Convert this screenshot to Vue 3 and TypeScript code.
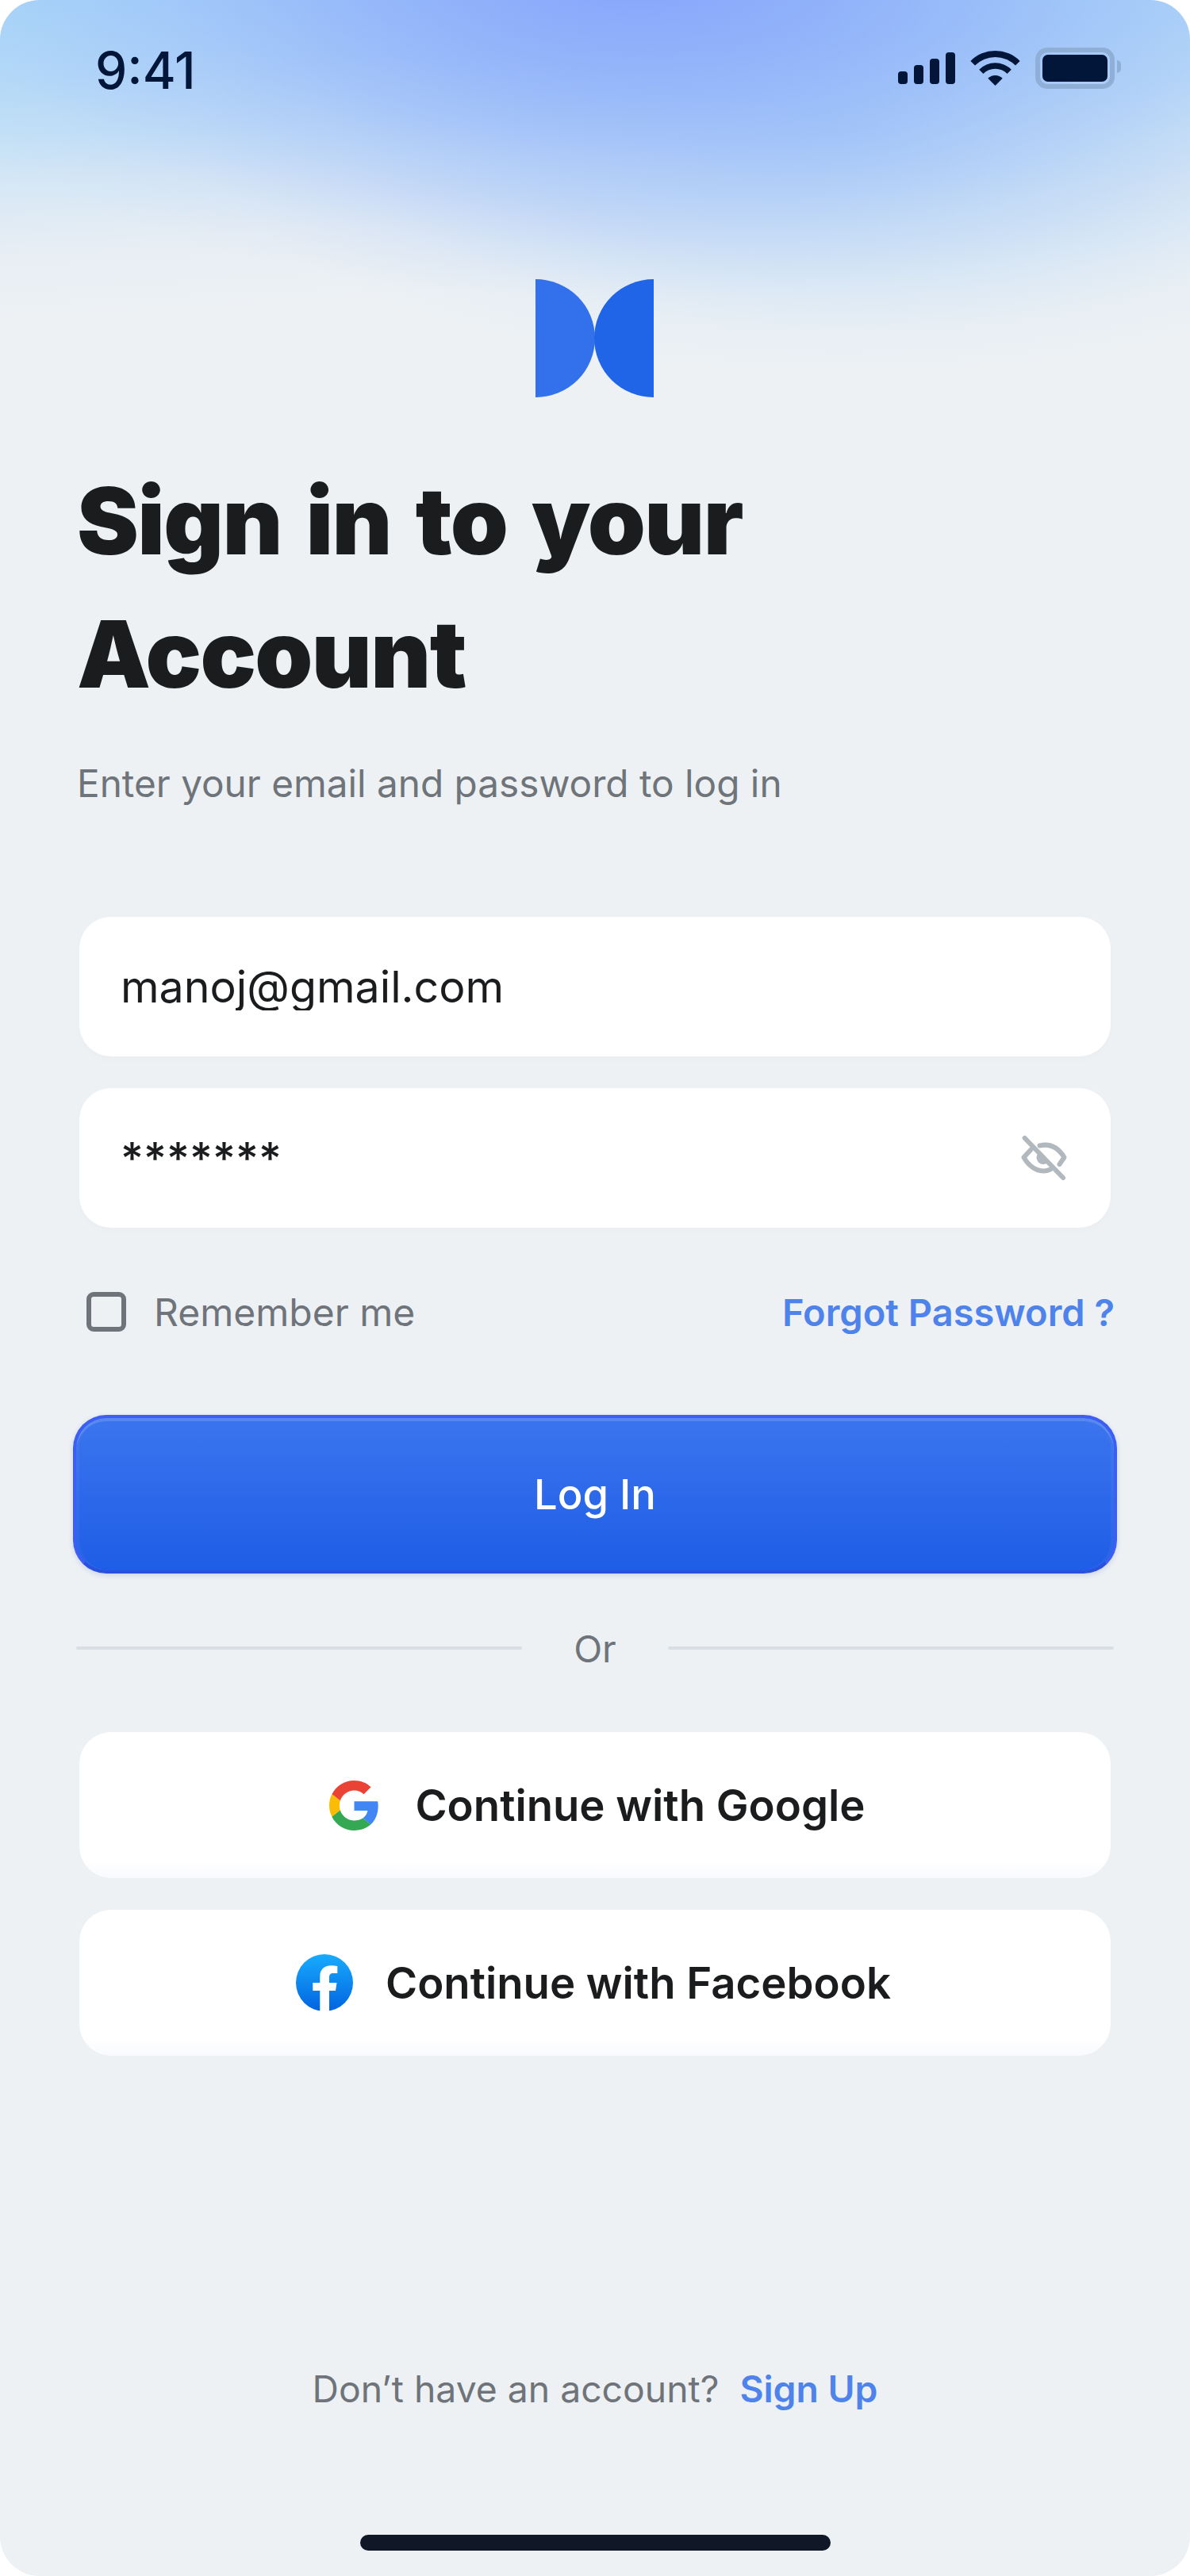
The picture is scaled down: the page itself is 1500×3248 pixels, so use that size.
<script setup lang="ts">
const email: string = 'manoj@gmail.com'
const secret: string = '*******'
const bars: number[] = [16, 24, 32, 40]
</script>

<template>
  <main class="page">
    <header class="status">
      <span class="time">9:41</span>
      <div class="status-icons">
        <div class="bars">
          <i v-for="h in bars" :key="h" class="bar" :style="{ height: h + 'px' }"></i>
        </div>
        <svg class="wifi" width="63" height="44" viewBox="-1 0 63 44" fill="#011638">
          <path d="M-.6 12.9A44 44 0 0 1 61.6 12.9L56 18.5A36 36 0 0 0 5 18.5Z" />
          <path d="M10.2 23.7A28.7 28.7 0 0 1 50.8 23.7L45.6 28.9A21.4 21.4 0 0 0 15.4 28.9Z" />
          <path d="M21.3 34.8A13 13 0 0 1 39.7 34.8L30.5 44Z" />
        </svg>
        <div class="battery"><div class="battery-fill"></div></div>
        <div class="battery-cap"></div>
      </div>
    </header>

    <svg class="logo" width="149" height="149" viewBox="0 0 149 149">
      <path d="M0 0A75 74.5 0 0 1 0 149Z" fill="#3370EB" />
      <path d="M149 0A75 74.5 0 0 0 149 149Z" fill="#2065E8" />
    </svg>

    <h1 class="title">Sign in to your<br />Account</h1>
    <p class="subtitle">Enter your email and password to log in</p>

    <div class="fields">
      <div class="field">
        <input class="field-input" type="text" :value="email" aria-label="Email" />
      </div>
      <div class="field">
        <input class="field-input secret" type="text" :value="secret" aria-label="Password" />
        <svg class="eye" width="60" height="60" viewBox="0 0 60 60" fill="none" stroke="#B1B8BE" stroke-width="6" stroke-linecap="round" stroke-linejoin="round">
          <path d="M4.7 5 53 55" />
          <path d="M23.5 14.5C34 12 45 14 54.5 29.3L48.5 38" />
          <path d="M12.5 19.5 3.5 29.3C13 46 27 49 37 44.5" />
          <path d="M22 23.5 33.5 36A8.5 8.5 0 0 1 22 23.5Z" fill="#B1B8BE" stroke="none" />
        </svg>
      </div>
    </div>

    <div class="options">
      <label class="remember"><span class="checkbox"></span><span>Remember me</span></label>
      <a class="forgot">Forgot Password ?</a>
    </div>

    <button class="login" type="button">Log In</button>

    <div class="divider">
      <span class="rule"></span>
      <span class="or">Or</span>
      <span class="rule"></span>
    </div>

    <div class="socials">
      <button class="social google" type="button">
        <svg width="63" height="63" viewBox="0 0 48 48">
          <path fill="#EA4335" d="M24 9.5c3.54 0 6.71 1.22 9.21 3.6l6.85-6.85C35.9 2.38 30.47 0 24 0 14.62 0 6.51 5.38 2.56 13.22l7.98 6.19C12.43 13.72 17.74 9.5 24 9.5z" />
          <path fill="#4285F4" d="M46.98 24.55c0-1.57-.15-3.09-.38-4.55H24v9.02h12.94c-.58 2.96-2.26 5.48-4.78 7.18l7.73 6c4.51-4.18 7.09-10.36 7.09-17.65z" />
          <path fill="#FBBC05" d="M10.53 28.59c-.48-1.45-.76-2.99-.76-4.59s.27-3.14.76-4.59l-7.98-6.19C.92 16.46 0 20.12 0 24c0 3.88.92 7.54 2.56 10.78l7.97-6.19z" />
          <path fill="#34A853" d="M24 48c6.48 0 11.93-2.13 15.89-5.81l-7.73-6c-2.15 1.45-4.92 2.3-8.16 2.3-6.26 0-11.57-4.22-13.47-9.91l-7.98 6.19C6.51 42.62 14.62 48 24 48z" />
        </svg>
        <span>Continue with Google</span>
      </button>
      <button class="social facebook" type="button">
        <svg width="72" height="72" viewBox="0 0 72 72">
          <defs>
            <linearGradient id="fb" x1="0" y1="0" x2="0" y2="1">
              <stop offset="0" stop-color="#18ACFE" />
              <stop offset="1" stop-color="#0163E0" />
            </linearGradient>
          </defs>
          <circle cx="36" cy="36" r="36" fill="url(#fb)" />
          <path fill="#fff" d="M30.3 72V46H21.3V36H30.3V28C30.3 19 36 14.3 44 14.3 47 14.3 50 14.6 52.3 15V24H47C43.5 24 42 26 42 29V36H51.5L50 46H42V72Z" />
        </svg>
        <span>Continue with Facebook</span>
      </button>
    </div>

    <footer class="signup">
      <span>Don’t have an account?</span>
      <a class="signup-link">Sign Up</a>
    </footer>
    <div class="home"></div>
  </main>
</template>

<style>
html, body { background: #fff; }
</style>

<style scoped>
.page {
  box-sizing: border-box;
  width: 1500px;
  height: 3248px;
  padding: 0 92px 32px;
  display: flex;
  flex-direction: column;
  border-radius: 50px;
  overflow: hidden;
  font-family: Inter, "Liberation Sans", sans-serif;
  background:
    radial-gradient(ellipse 1000px 420px at 800px -40px, #86A3FB 0%, rgba(134, 163, 251, 0.66) 30%, rgba(134, 163, 251, 0.28) 60%, rgba(134, 163, 251, 0.06) 85%, rgba(134, 163, 251, 0) 100%),
    radial-gradient(ellipse 800px 300px at 1060px 170px, rgba(150, 198, 248, 0.6) 0%, rgba(150, 198, 248, 0.32) 50%, rgba(150, 198, 248, 0.08) 80%, rgba(150, 198, 248, 0) 100%),
    linear-gradient(177deg, #ABD7F8 0px, #B6DBF7 100px, #C4E1F6 170px, #D8E8F5 240px, #E6EDF4 310px, #EDF1F4 400px);
  background-color: #EDF1F4;
}
.status {
  flex: none;
  display: flex;
  justify-content: space-between;
  align-items: center;
  height: 52px;
  margin: 60px -5px 0 28px;
}
.time {
  margin-top: 5px;
  font-size: 64px;
  font-weight: 500;
  line-height: 52px;
  color: #011638;
}
.status-icons { display: flex; align-items: center; }
.bars { display: flex; align-items: flex-end; gap: 8px; margin-right: 19px; height: 40px; }
.bar { display: block; width: 12px; border-radius: 4px; background: #011638; }
.wifi { margin-right: 19px; }
.battery {
  box-sizing: border-box;
  width: 100px;
  height: 52px;
  padding: 3px;
  border: 6px solid #8FAFD6;
  border-radius: 15px;
}
.battery-fill { width: 100%; height: 100%; border-radius: 7px; background: #011638; }
.battery-cap { width: 5px; height: 16px; margin-left: 3px; margin-top: -4px; border-radius: 0 8px 8px 0; background: #8FAFD6; }
.logo { flex: none; align-self: center; margin-top: 240px; margin-right: 2px; }
.title {
  margin: 72px 0 0 5px;
  font-size: 117px;
  line-height: 168px;
  font-weight: 900;
  letter-spacing: -1.6px;
  word-spacing: 9px;
  color: #1A1C1E;
}
.subtitle {
  margin: 49px 0 0 5px;
  font-size: 47.7px;
  line-height: 60px;
  color: #6F747A;
}
.fields { margin: 138px 8px 0; display: flex; flex-direction: column; gap: 40px; }
.field {
  display: flex;
  align-items: center;
  height: 176px;
  padding: 0 53px 0 52px;
  border-radius: 40px;
  background: #fff;
  box-shadow: 0 4px 10px rgba(30, 40, 60, 0.015);
}
.field-input {
  flex: 1;
  min-width: 0;
  padding: 0;
  border: 0;
  outline: 0;
  background: transparent;
  font: 400 55.5px/60px Inter, "Liberation Sans", sans-serif;
  color: #1A1C1E;
}
.secret { letter-spacing: 0.1px; font-weight: 500; }
.eye { flex: none; }
.options {
  display: flex;
  justify-content: space-between;
  align-items: center;
  height: 50px;
  margin: 81px 3px 0 17px;
}
.remember { display: flex; align-items: center; gap: 35px; font-size: 48px; color: #6F747A; }
.checkbox { box-sizing: border-box; width: 50px; height: 50px; border: 6px solid #6F747A; border-radius: 9px; }
.forgot { font-size: 47px; font-weight: 600; color: #4F83EC; }
.login {
  flex: none;
  width: 1316px;
  height: 200px;
  margin-top: 105px;
  border: 4px solid #3D5EF3;
  border-bottom-color: #2C50DE;
  border-radius: 42px;
  background: linear-gradient(180deg, #3B75EE 0%, #1E5DE6 100%);
  box-shadow: inset 0 4px 0 rgba(255, 255, 255, 0.14), inset 4px 0 0 rgba(255, 255, 255, 0.04), inset -4px 0 0 rgba(255, 255, 255, 0.04), 0 2px 6px rgba(40, 70, 180, 0.18);
  font: 500 52.5px/60px Inter, "Liberation Sans", sans-serif;
  color: #fff;
}
.divider { display: flex; align-items: center; height: 60px; margin: 64px 4px 0; }
.rule { flex: 1; height: 4px; border-radius: 2px; background: #D9DEE2; }
.or { width: 184px; text-align: center; font-size: 47px; color: #6F747A; }
.socials { margin: 76px 8px 0; display: flex; flex-direction: column; gap: 40px; }
.social {
  display: flex;
  align-items: center;
  justify-content: center;
  height: 184px;
  padding: 0;
  border: 0;
  border-radius: 40px;
  background: linear-gradient(180deg, #fff 88%, #F9FAFD 100%);
  font: 600 54.5px/60px Inter, "Liberation Sans", sans-serif;
  color: #1A1C1E;
}
.google { gap: 45px; padding-left: 6px; }
.facebook { gap: 41px; padding-right: 4px; }
.signup {
  display: flex;
  justify-content: center;
  gap: 26px;
  margin-top: auto;
  line-height: 60px;
  font-size: 46.3px;
  color: #6F747A;
}
.signup-link { font-weight: 600; color: #4F83EC; }
.home {
  flex: none;
  align-self: center;
  width: 593px;
  height: 20px;
  margin-top: 154px;
  border-radius: 10px;
  background: #101828;
}
</style>
